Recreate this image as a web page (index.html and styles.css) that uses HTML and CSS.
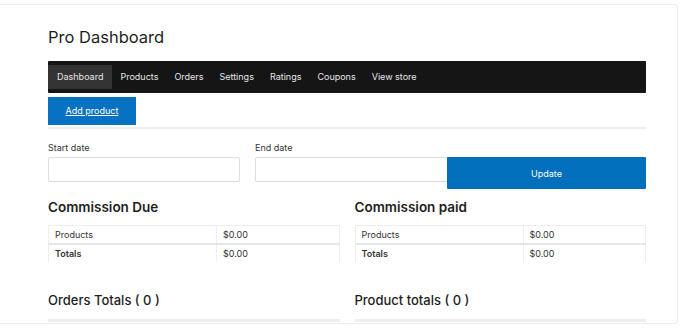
FILE: index.html
```html
<!DOCTYPE html>
<html lang="en">
<head>
    <meta charset="UTF-8">
    <meta name="viewport" content="width=device-width, initial-scale=1.0">
    <title>Pro Dashboard</title>
    <link rel="stylesheet" href="styles.css">
</head>
<body>
    <div class="card">
        <h1>Pro Dashboard</h1>

        <nav class="tabs">
            <a class="tab active" href="#">Dashboard</a>
            <a class="tab" href="#">Products</a>
            <a class="tab" href="#">Orders</a>
            <a class="tab" href="#">Settings</a>
            <a class="tab" href="#">Ratings</a>
            <a class="tab" href="#">Coupons</a>
            <a class="tab" href="#">View store</a>
        </nav>

        <div class="toolbar">
            <a class="add-button" href="#">Add product</a>
        </div>

        <form class="date-form">
            <label class="field">
                <span>Start date</span>
                <input type="text">
            </label>
            <label class="field field-end">
                <span>End date</span>
                <input type="text">
            </label>
            <button type="button" class="update-button">Update</button>
        </form>

        <div class="columns">
            <section class="panel">
                <h2>Commission Due</h2>
                <table class="totals">
                    <tr><td>Products</td><td>$0.00</td></tr>
                    <tr><th>Totals</th><td>$0.00</td></tr>
                </table>
            </section>
            <section class="panel">
                <h2>Commission paid</h2>
                <table class="totals">
                    <tr><td>Products</td><td>$0.00</td></tr>
                    <tr><th>Totals</th><td>$0.00</td></tr>
                </table>
            </section>
        </div>

        <div class="columns">
            <section class="panel">
                <h2 class="count-title">Orders Totals ( 0 )</h2>
                <div class="rule"></div>
            </section>
            <section class="panel">
                <h2 class="count-title">Product totals ( 0 )</h2>
                <div class="rule"></div>
            </section>
        </div>
    </div>
</body>
</html>
```

FILE: styles.css
```css
body {
    font-family: Inter, "Noto Sans", Arial, sans-serif;
    margin: 0;
    padding: 0;
    background-color: #fff;
    color: #1e1e1e;
}
.card {
    margin: 4px 7px 0 0;
    border: 1px solid #ececec;
    border-left: none;
    border-radius: 0 4px 4px 0;
    padding: 20px 31px 3px 48px;
    height: 320px;
    box-sizing: border-box;
    overflow: hidden;
}
h1 {
    margin: 0 0 12px;
    font-size: 16.5px;
    font-weight: 400;
    line-height: 24px;
}
.tabs {
    display: flex;
    background-color: #151515;
    padding: 4px 0;
    border-radius: 1px;
}
.tab {
    color: #e6e6e6;
    font-size: 9px;
    line-height: 24px;
    padding: 0 8px;
    text-decoration: none;
}
.tab.active {
    background-color: #333;
    padding: 0 9px 0 9px;
}
.toolbar {
    padding-top: 4px;
    padding-bottom: 2px;
    border-bottom: 2px solid #eee;
}
.add-button {
    display: inline-block;
    width: 88px;
    height: 28px;
    line-height: 28px;
    text-align: center;
    background-color: #0872c2;
    color: #fff;
    font-size: 9px;
    text-decoration: underline;
}
.date-form {
    display: flex;
    align-items: flex-start;
    margin-top: 13px;
}
.field {
    display: flex;
    flex-direction: column;
    width: 192px;
    margin-right: 15px;
}
.field span {
    font-size: 9px;
    color: #333;
    line-height: 12px;
    margin-bottom: 3px;
}
.field input {
    height: 25px;
    box-sizing: border-box;
    border: 1px solid #ddd;
    border-radius: 2px;
    margin: 0;
}
.field-end {
    width: 200px;
    margin-right: -8px;
}
.update-button {
    position: relative;
    flex: 1;
    margin-top: 15px;
    height: 32px;
    border: none;
    border-radius: 1px;
    background-color: #016fbc;
    color: #fff;
    font-family: inherit;
    font-size: 9px;
}
.columns {
    display: flex;
    gap: 15px;
}
.panel {
    flex: 1;
}
h2 {
    margin: 9px 0 9px;
    font-size: 13.5px;
    font-weight: 600;
    line-height: 18px;
}
.totals {
    width: 100%;
    border-collapse: collapse;
    border: 1px solid #eee;
    border-bottom: none;
    font-size: 9px;
    color: #333;
}
.totals td, .totals th {
    text-align: left;
    padding: 0 6px;
    height: 17px;
}
.totals td:first-child, .totals th {
    width: 155px;
    border-right: 1px solid #f0f0f0;
}
.totals tr:first-child td {
    border-bottom: 2px solid #e6e6e6;
}
.totals th {
    font-weight: 600;
}
.count-title {
    margin: 29px 0 10px;
    font-size: 13px;
    font-weight: 500;
}
.rule {
    height: 3px;
    background-color: #eee;
}
```
